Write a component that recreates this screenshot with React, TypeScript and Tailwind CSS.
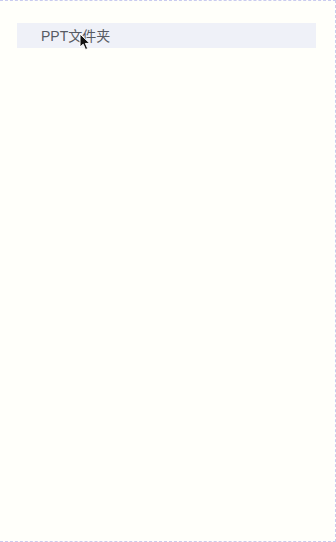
const App = () => {
    return (
        <div className="w-[336px] h-[542px] bg-[#fffffa] border-t border-r border-b border-dashed border-[#c9cbef] pt-[22px] px-[17px]" style={{ fontFamily: '"Liberation Sans", "Noto Sans CJK SC", sans-serif' }}>
            {/* Folder row */}
            <div className="relative h-[25px] w-[299px] bg-[#eff1f8] flex items-center pl-[24px]">
                <span className="text-[14px] text-[#575b63] leading-none">PPT文件夹</span>
                {/* Mouse cursor */}
                <svg className="absolute left-[62px] top-[10px]" width="13" height="18" viewBox="0 0 13 18">
                    <path d="M1 1 L1 14 L4.2 11.2 L6.5 16.5 L8.7 15.6 L6.4 10.4 L10.8 10.4 Z" fill="#111" stroke="#fff" strokeWidth="1" />
                </svg>
            </div>
        </div>
    );
};

export default App;
